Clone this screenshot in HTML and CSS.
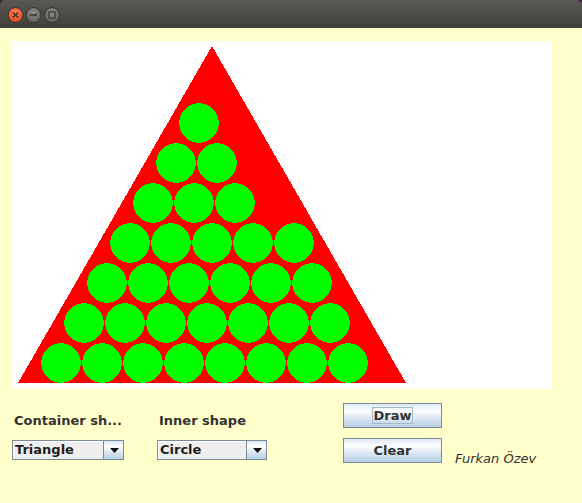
FILE: index.html
```html
<!DOCTYPE html>
<html>
<head>
<meta charset="utf-8">
<link rel="stylesheet" href="styles.css">
</head>
<body>
<div class="window">
  <div class="titlebar">
    <svg class="wm-buttons" width="70" height="28" viewBox="0 0 70 28">
      <defs>
        <radialGradient id="gc" cx="50%" cy="35%" r="60%">
          <stop offset="0" stop-color="#f7875c"/>
          <stop offset="1" stop-color="#df4a16"/>
        </radialGradient>
        <radialGradient id="gg" cx="50%" cy="35%" r="60%">
          <stop offset="0" stop-color="#8e8c86"/>
          <stop offset="1" stop-color="#64625d"/>
        </radialGradient>
      </defs>
      <circle cx="15.5" cy="15" r="7.5" fill="url(#gc)" stroke="#34332f" stroke-width="1"/>
      <path d="M13 12.5 L18 17.5 M18 12.5 L13 17.5" stroke="#3a2a24" stroke-width="1.4" fill="none"/>
      <circle cx="33.5" cy="15" r="7.5" fill="url(#gg)" stroke="#34332f" stroke-width="1"/>
      <path d="M30 15 L37 15" stroke="#3a3935" stroke-width="1.6"/>
      <circle cx="52" cy="15" r="7.5" fill="url(#gg)" stroke="#34332f" stroke-width="1"/>
      <rect x="49" y="12" width="6" height="6" fill="none" stroke="#3a3935" stroke-width="1.3"/>
    </svg>
  </div>
  <div class="content">
    <div class="canvas">
      <svg width="540" height="348" viewBox="0 0 540 348" shape-rendering="crispEdges">
        <polygon points="200,5 6,342 394,342" fill="#ff0000"/>
        <g fill="#00ff00">
          <circle cx="187" cy="82" r="19.8"/>
          <circle cx="164" cy="122" r="19.8"/>
          <circle cx="205" cy="122" r="19.8"/>
          <circle cx="141" cy="162" r="19.8"/>
          <circle cx="182" cy="162" r="19.8"/>
          <circle cx="223" cy="162" r="19.8"/>
          <circle cx="118" cy="202" r="19.8"/>
          <circle cx="159" cy="202" r="19.8"/>
          <circle cx="200" cy="202" r="19.8"/>
          <circle cx="241" cy="202" r="19.8"/>
          <circle cx="282" cy="202" r="19.8"/>
          <circle cx="95" cy="242" r="19.8"/>
          <circle cx="136" cy="242" r="19.8"/>
          <circle cx="177" cy="242" r="19.8"/>
          <circle cx="218" cy="242" r="19.8"/>
          <circle cx="259" cy="242" r="19.8"/>
          <circle cx="300" cy="242" r="19.8"/>
          <circle cx="72" cy="282" r="19.8"/>
          <circle cx="113" cy="282" r="19.8"/>
          <circle cx="154" cy="282" r="19.8"/>
          <circle cx="195" cy="282" r="19.8"/>
          <circle cx="236" cy="282" r="19.8"/>
          <circle cx="277" cy="282" r="19.8"/>
          <circle cx="318" cy="282" r="19.8"/>
          <circle cx="49" cy="322" r="19.8"/>
          <circle cx="90" cy="322" r="19.8"/>
          <circle cx="131" cy="322" r="19.8"/>
          <circle cx="172" cy="322" r="19.8"/>
          <circle cx="213" cy="322" r="19.8"/>
          <circle cx="254" cy="322" r="19.8"/>
          <circle cx="295" cy="322" r="19.8"/>
          <circle cx="336" cy="322" r="19.8"/>
        </g>
      </svg>
    </div>
    <div class="controls">
      <div class="col">
        <div class="label">Container sh...</div>
        <div class="combo combo-wide">
          <span class="combo-value">Triangle</span>
          <span class="combo-btn"><svg width="9" height="5" viewBox="0 0 9 5"><polygon points="0,0 9,0 4.5,5" fill="#111"/></svg></span>
        </div>
      </div>
      <div class="col">
        <div class="label">Inner shape</div>
        <div class="combo combo-narrow">
          <span class="combo-value">Circle</span>
          <span class="combo-btn"><svg width="9" height="5" viewBox="0 0 9 5"><polygon points="0,0 9,0 4.5,5" fill="#111"/></svg></span>
        </div>
      </div>
      <div class="col col-buttons">
        <button class="btn"><span class="focus">Draw</span></button>
        <button class="btn">Clear</button>
      </div>
      <div class="col col-author">
        <span class="author">Furkan Özev</span>
      </div>
    </div>
  </div>
</div>
</body>
</html>
```
FILE: styles.css
```css
html, body {
  margin: 0;
  padding: 0;
  background: #3b2637;
}
.window {
  width: 582px;
  height: 503px;
  display: flex;
  flex-direction: column;
  overflow: hidden;
  font-family: "DejaVu Sans", sans-serif;
}
.titlebar {
  height: 28px;
  flex: none;
  background: linear-gradient(#5a5853, #403f3b);
  border-radius: 5px 5px 0 0;
  display: flex;
  align-items: flex-start;
}
.wm-buttons {
  display: block;
}
.content {
  flex: 1;
  background: #ffffcc;
  padding: 13px 0 0 12px;
}
.canvas {
  width: 540px;
  height: 348px;
  background: #ffffff;
}
.canvas svg {
  display: block;
}
.controls {
  display: grid;
  grid-template-columns: 145px 186px 112px 1fr;
  margin-top: 14px;
}
.col {
  display: flex;
  flex-direction: column;
  align-items: flex-start;
}
.label {
  padding-top: 10px;
  padding-left: 2px;
  height: 15px;
  line-height: 15px;
  font-size: 13px;
  font-weight: bold;
  color: #333333;
  white-space: nowrap;
}
.combo {
  margin-top: 12px;
  height: 20px;
  box-sizing: border-box;
  border: 1px solid #7a8a99;
  background: #eeeeee;
  display: flex;
}
.combo-wide {
  width: 112px;
}
.combo-narrow {
  width: 110px;
}
.combo-value {
  flex: 1;
  padding-left: 2px;
  line-height: 18px;
  font-size: 13px;
  font-weight: bold;
  color: #1e1e1e;
  box-shadow: inset 1px 1px 0 #ffffff;
}
.combo-btn {
  width: 19px;
  border-left: 1px solid #7a8a99;
  background: linear-gradient(#dde8f3 0%, #ffffff 30%, #dde8f3 60%, #b8cfe5 100%);
  display: flex;
  align-items: center;
  justify-content: center;
}
.combo-btn svg {
  display: block;
  margin-left: 1px;
}
.col-buttons {
  gap: 10px;
}
.btn {
  display: flex;
  align-items: center;
  justify-content: center;
  width: 99px;
  height: 25px;
  margin: 0;
  padding: 0;
  box-sizing: border-box;
  border: 1px solid #7a8a99;
  border-radius: 0;
  background: linear-gradient(#dde8f3 0%, #ffffff 30%, #dde8f3 60%, #b8cfe5 100%);
  font-family: "DejaVu Sans", sans-serif;
  font-size: 13px;
  font-weight: bold;
  color: #333333;
  line-height: 15px;
}
.focus {
  border: 1px solid #a3b8cc;
  padding: 0 1px;
  line-height: 15px;
}
.col-author {
  padding-top: 48px;
}
.author {
  font-size: 13px;
  line-height: 15px;
  font-style: italic;
  color: #333333;
  white-space: nowrap;
}
```
